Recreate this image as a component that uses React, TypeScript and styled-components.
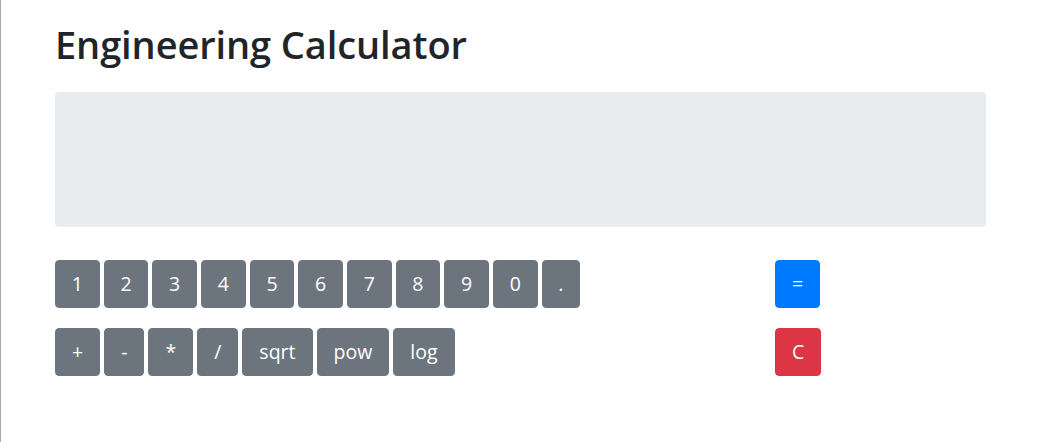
import React from "react";
import styled, { createGlobalStyle } from "styled-components";

const GlobalStyle = createGlobalStyle`
  html, body { margin: 0; padding: 0; height: 100%; background: #fff; }
  body {
    font-family: "Open Sans", "Noto Sans", "Liberation Sans", sans-serif;
    color: #212529;
    border-left: 1px solid #a9a9a9;
    box-sizing: border-box;
  }
  #root { min-height: 100%; }
`;

const Page = styled.div`
  padding: 20px 51px 0 54px;
`;

const Title = styled.h1`
  margin: 0 0 24px;
  font-size: 38px;
  font-weight: 600;
  line-height: 48px;
  color: #212529;
  letter-spacing: -0.1px;
`;

const Display = styled.div`
  height: 135px;
  background: #e9ecef;
  border-radius: 4px;
  margin-bottom: 33px;
`;

const Keypad = styled.div`
  display: grid;
  grid-template-columns: 690px auto;
  column-gap: 30px;
  row-gap: 20px;
`;

const KeyRow = styled.div`
  display: flex;
  gap: 4px;
`;

type Variant = "secondary" | "primary" | "danger";
const colors: Record<Variant, string> = {
  secondary: "#6c757d",
  primary: "#007bff",
  danger: "#dc3545",
};

const Key = styled.button<{ $variant?: Variant; $padX?: number }>`
  font-family: inherit;
  font-size: 19.5px;
  line-height: 30px;
  padding: 8px ${(p) => p.$padX ?? 16}px;
  border-radius: 4px;
  border: 1px solid ${(p) => colors[p.$variant ?? "secondary"]};
  background: ${(p) => colors[p.$variant ?? "secondary"]};
  color: #fff;
  cursor: pointer;
  height: 48px;
  box-sizing: border-box;
`;

const digits = ["1", "2", "3", "4", "5", "6", "7", "8", "9", "0", "."];
const ops = ["+", "-", "*", "/", "sqrt", "pow", "log"];

export default function App() {
  return (
    <>
      <GlobalStyle />
      <Page>
        <Title>Engineering Calculator</Title>
        <Display />
        <Keypad>
          <KeyRow>
            {digits.map((d) => (
              <Key key={d} $padX={15.75}>
                {d}
              </Key>
            ))}
          </KeyRow>
          <KeyRow>
            <Key $variant="primary">=</Key>
          </KeyRow>
          <KeyRow>
            {ops.map((o) => (
              <Key key={o}>{o}</Key>
            ))}
          </KeyRow>
          <KeyRow>
            <Key $variant="danger">C</Key>
          </KeyRow>
        </Keypad>
      </Page>
    </>
  );
}
